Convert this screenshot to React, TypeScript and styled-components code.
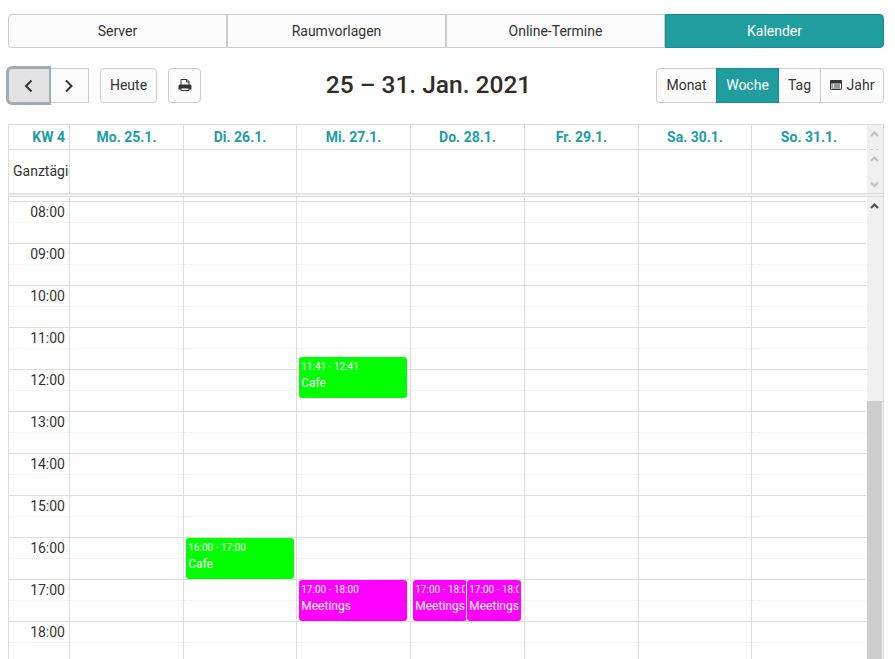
import React from 'react';
import styled, { createGlobalStyle, css } from 'styled-components';

const GlobalStyle = createGlobalStyle`
  *, *::before, *::after { box-sizing: border-box; }
  body {
    margin: 0;
    background: #fff;
    color: #333;
    font: 14px/20px Roboto, "Liberation Sans", sans-serif;
    overflow: hidden;
  }
`;

const line = '#dddddd';
const teal = '#209e9f';
const columns = '61px 114px 113px 114px 114px 114px 113px 114px';

const Page = styled.main`
  display: flex;
  flex-direction: column;
  height: 659px;
  padding: 14px 11px 0 8px;
  overflow: hidden;
`;

const activeStyle = css`
  background: ${teal};
  border-color: #1b8b8c;
  color: #fff;
`;

const Tabs = styled.nav`
  display: grid;
  grid-template-columns: repeat(4, 1fr);
  height: 34px;
`;

const Tab = styled.button<{ $active?: boolean }>`
  padding: 0;
  border: 1px solid #cccccc;
  background: #fcfcfc;
  color: #333;
  font: inherit;
  &:first-child { border-radius: 4px 0 0 4px; }
  &:last-child { border-radius: 0 4px 4px 0; }
  ${p => p.$active && activeStyle}
`;

const Toolbar = styled.header`
  display: grid;
  grid-template-columns: 193px 1fr 228px;
  height: 35px;
  margin: 20px 0 21px;
`;

const Title = styled.h2`
  margin: 0;
  text-align: center;
  font-size: 24.5px;
  line-height: 34px;
  font-weight: 500;
  color: #332b27;
`;

const ButtonSet = styled.div`
  display: flex;
`;

const Button = styled.button<{ $width: number; $active?: boolean; $focused?: boolean }>`
  display: flex;
  align-items: center;
  justify-content: center;
  gap: 5px;
  flex: none;
  width: ${p => p.$width}px;
  padding: 0 0 2px;
  border: 1px solid #cccccc;
  background: #fcfcfc;
  color: #333;
  font: inherit;
  & + & { margin-left: -1px; }
  &:first-child { border-radius: 4px 0 0 4px; }
  &:last-child { border-radius: 0 4px 4px 0; }
  ${p => p.$active && css`${activeStyle} z-index: 1;`}
  ${p => p.$focused && css`
    background: #e3e3e3;
    border-color: #a3abb1;
    box-shadow: 0 0 0 2px #a3abb1;
    clip-path: inset(-2px -1px -2px -2px);
    z-index: 1;
  `}
`;

const Solo = styled.div`
  display: flex;
  gap: 11px;
  margin-left: 11px;
  & > button:nth-child(n) { margin: 0; border-radius: 4px; }
`;

const Calendar = styled.section`
  display: flex;
  flex-direction: column;
  flex: 1;
  min-height: 0;
  border: 1px solid ${line};
  border-bottom: 0;
`;

const Band = styled.div<{ $height?: number }>`
  display: flex;
  justify-content: space-between;
  flex: ${p => (p.$height ? 'none' : '1')};
  height: ${p => (p.$height ? `${p.$height}px` : 'auto')};
  min-height: 0;
  overflow: hidden;
`;

const Divider = styled.div`
  flex: none;
  height: 4px;
  border: solid ${line};
  border-width: 1px 0;
  background: #f0f0f0;
`;

const Row = styled.div<{ $rule?: boolean }>`
  display: grid;
  grid-template-columns: ${columns};
  height: 100%;
  border-bottom: ${p => (p.$rule ? `1px solid ${line}` : '0')};
`;

const Cell = styled.div`
  border-right: 1px solid ${line};
  overflow: hidden;
  white-space: nowrap;
  &:last-child { border-right: 0; }
`;

const DayName = styled(Cell)`
  color: ${teal};
  font-weight: 700;
  line-height: 24px;
  text-align: center;
  &:first-child { padding-right: 4px; text-align: right; }
`;

const AllDayLabel = styled(Cell)`
  padding-left: 4px;
  line-height: 42px;
`;

const SlotArea = styled.div`
  position: relative;
`;

const HourRow = styled.div`
  display: grid;
  grid-template-columns: ${columns};
  height: 42px;
`;

const LeadRow = styled(HourRow)`
  height: 4px;
`;

const Slot = styled(Cell)`
  border-top: 1px solid ${line};
  &::before {
    content: '';
    display: block;
    height: 21px;
    border-bottom: 1px dotted #ececec;
  }
`;

const TimeSlot = styled(Slot)`
  display: grid;
  grid-template: 41px / 60px;
  &::before, & > span { grid-area: 1 / 1; }
`;

const Time = styled.span`
  padding-right: 4px;
  text-align: right;
`;

const Event = styled.article<{ $x: number; $y: number; $w: number; $color: string; $split?: boolean }>`
  position: absolute;
  left: ${p => p.$x}px;
  top: ${p => p.$y}px;
  width: ${p => p.$w}px;
  height: 41px;
  padding: 2px 2px 0 2.25px;
  border-radius: 3px;
  background: ${p => p.$color};
  box-shadow: ${p => (p.$split ? '-1px 0 0 #fff' : 'none')};
  color: #fff;
  font-size: 12px;
  line-height: 16px;
  white-space: nowrap;
`;

const EventTime = styled.div`
  height: 16px;
  overflow: hidden;
  font-size: 10px;
  line-height: 16px;
`;

const Scroll = styled.div<{ $clipped?: boolean }>`
  display: flex;
  flex-direction: column;
  align-items: center;
  justify-content: ${p => (p.$clipped ? 'flex-start' : 'space-between')};
  gap: ${p => (p.$clipped ? '1px' : '0')};
  width: 16px;
  height: 100%;
  overflow: hidden;
  background: #f0f0f0;
  & > * { flex: none; }
`;

const Thumb = styled.div`
  width: 15px;
  height: 258px;
  align-self: flex-start;
  background: #cdcdcd;
`;

const Arrow = ({ down, dark }: { down?: boolean; dark?: boolean }) => (
  <svg width="16" height="17" viewBox="0 0 16 17" fill="none" stroke={dark ? '#505050' : '#bfbfbf'} strokeWidth="2.2">
    <path d={down ? 'M4 6.5 7.5 10 11 6.5' : 'M4 11 7.5 7.5 11 11'} />
  </svg>
);

const Angle = ({ right }: { right?: boolean }) => (
  <svg width="10" height="14" viewBox="0 0 10 14" fill="none" stroke="#333" strokeWidth="2">
    <path d={right ? 'M2 2.5 7.5 8 2 13.5' : 'M7.5 2.5 2 8 7.5 13.5'} />
  </svg>
);

const PrintIcon = () => (
  <svg width="14" height="14" viewBox="0 0 14 14">
    <path d="M3 7V1.5h6l2 2V7" fill="none" stroke="#333" />
    <path d="M8.5 1.5V4H11" fill="none" stroke="#333" />
    <path d="M.5 8Q.5 6.5 2 6.5h10q1.5 0 1.5 1.5v3.5H.5z" fill="#333" />
    <path d="M3 10h8v2.5H3z" fill="#fff" stroke="#333" />
  </svg>
);

const TableIcon = () => (
  <svg width="12" height="10" viewBox="0 0 12 10">
    <rect x=".5" y=".5" width="11" height="9" rx="1" fill="#fcfcfc" stroke="#333" />
    <path d="M0 1q0-1 1-1h10q1 0 1 1v2.5H0zM2 4.5h1v1H2zM4 4.5h6v1H4zM2 6.5h1v1H2zM4 6.5h6v1H4z" fill="#333" />
    <path d="M1 3h1v6H1zM2 8h9v1H2z" fill="#333" opacity=".4" />
  </svg>
);

const days = ['Mo. 25.1.', 'Di. 26.1.', 'Mi. 27.1.', 'Do. 28.1.', 'Fr. 29.1.', 'Sa. 30.1.', 'So. 31.1.'];
const hours = ['08:00', '09:00', '10:00', '11:00', '12:00', '13:00', '14:00', '15:00', '16:00', '17:00', '18:00'];
const green = '#00ff00';
const magenta = '#ff00ff';
const events = [
  { x: 290, y: 160, w: 108, color: green, time: '11:41 - 12:41', title: 'Cafe' },
  { x: 177, y: 341, w: 108, color: green, time: '16:00 - 17:00', title: 'Cafe' },
  { x: 290, y: 383, w: 108, color: magenta, time: '17:00 - 18:00', title: 'Meetings' },
  { x: 404, y: 383, w: 54, color: magenta, time: '17:00 - 18:00', title: 'Meetings' },
  { x: 458, y: 383, w: 54, color: magenta, time: '17:00 - 18:00', title: 'Meetings', split: true },
];

export default function App() {
  return (
    <Page>
      <GlobalStyle />
      <Tabs>
        <Tab>Server</Tab>
        <Tab>Raumvorlagen</Tab>
        <Tab>Online-Termine</Tab>
        <Tab $active>Kalender</Tab>
      </Tabs>
      <Toolbar>
        <ButtonSet>
          <Button $width={42} $focused aria-label="Zurück"><Angle /></Button>
          <Button $width={40} aria-label="Weiter"><Angle right /></Button>
          <Solo>
            <Button $width={57}>Heute</Button>
            <Button $width={33} aria-label="Drucken"><PrintIcon /></Button>
          </Solo>
        </ButtonSet>
        <Title>25 – 31. Jan. 2021</Title>
        <ButtonSet>
          <Button $width={61}>Monat</Button>
          <Button $width={63} $active>Woche</Button>
          <Button $width={43}>Tag</Button>
          <Button $width={64}><TableIcon />Jahr</Button>
        </ButtonSet>
      </Toolbar>
      <Calendar>
        <Band $height={25}>
          <Row $rule>
            <DayName>KW 4</DayName>
            {days.map(d => <DayName key={d}>{d}</DayName>)}
          </Row>
          <Scroll $clipped><Arrow /><Arrow down /></Scroll>
        </Band>
        <Band $height={43}>
          <Row>
            <AllDayLabel>Ganztägig</AllDayLabel>
            {days.map(d => <Cell key={d} />)}
          </Row>
          <Scroll><Arrow /><Arrow down /></Scroll>
        </Band>
        <Divider />
        <Band>
          <SlotArea>
            <LeadRow><Cell />{days.map(d => <Cell key={d} />)}</LeadRow>
            {hours.map(h => (
              <HourRow key={h}>
                <TimeSlot><Time>{h}</Time></TimeSlot>
                {days.map(d => <Slot key={d} />)}
              </HourRow>
            ))}
            {events.map(e => (
              <Event key={`${e.x}-${e.y}`} $x={e.x} $y={e.y} $w={e.w} $color={e.color} $split={e.split}>
                <EventTime>{e.time}</EventTime>
                {e.title}
              </Event>
            ))}
          </SlotArea>
          <Scroll><Arrow dark /><Thumb /></Scroll>
        </Band>
      </Calendar>
    </Page>
  );
}
